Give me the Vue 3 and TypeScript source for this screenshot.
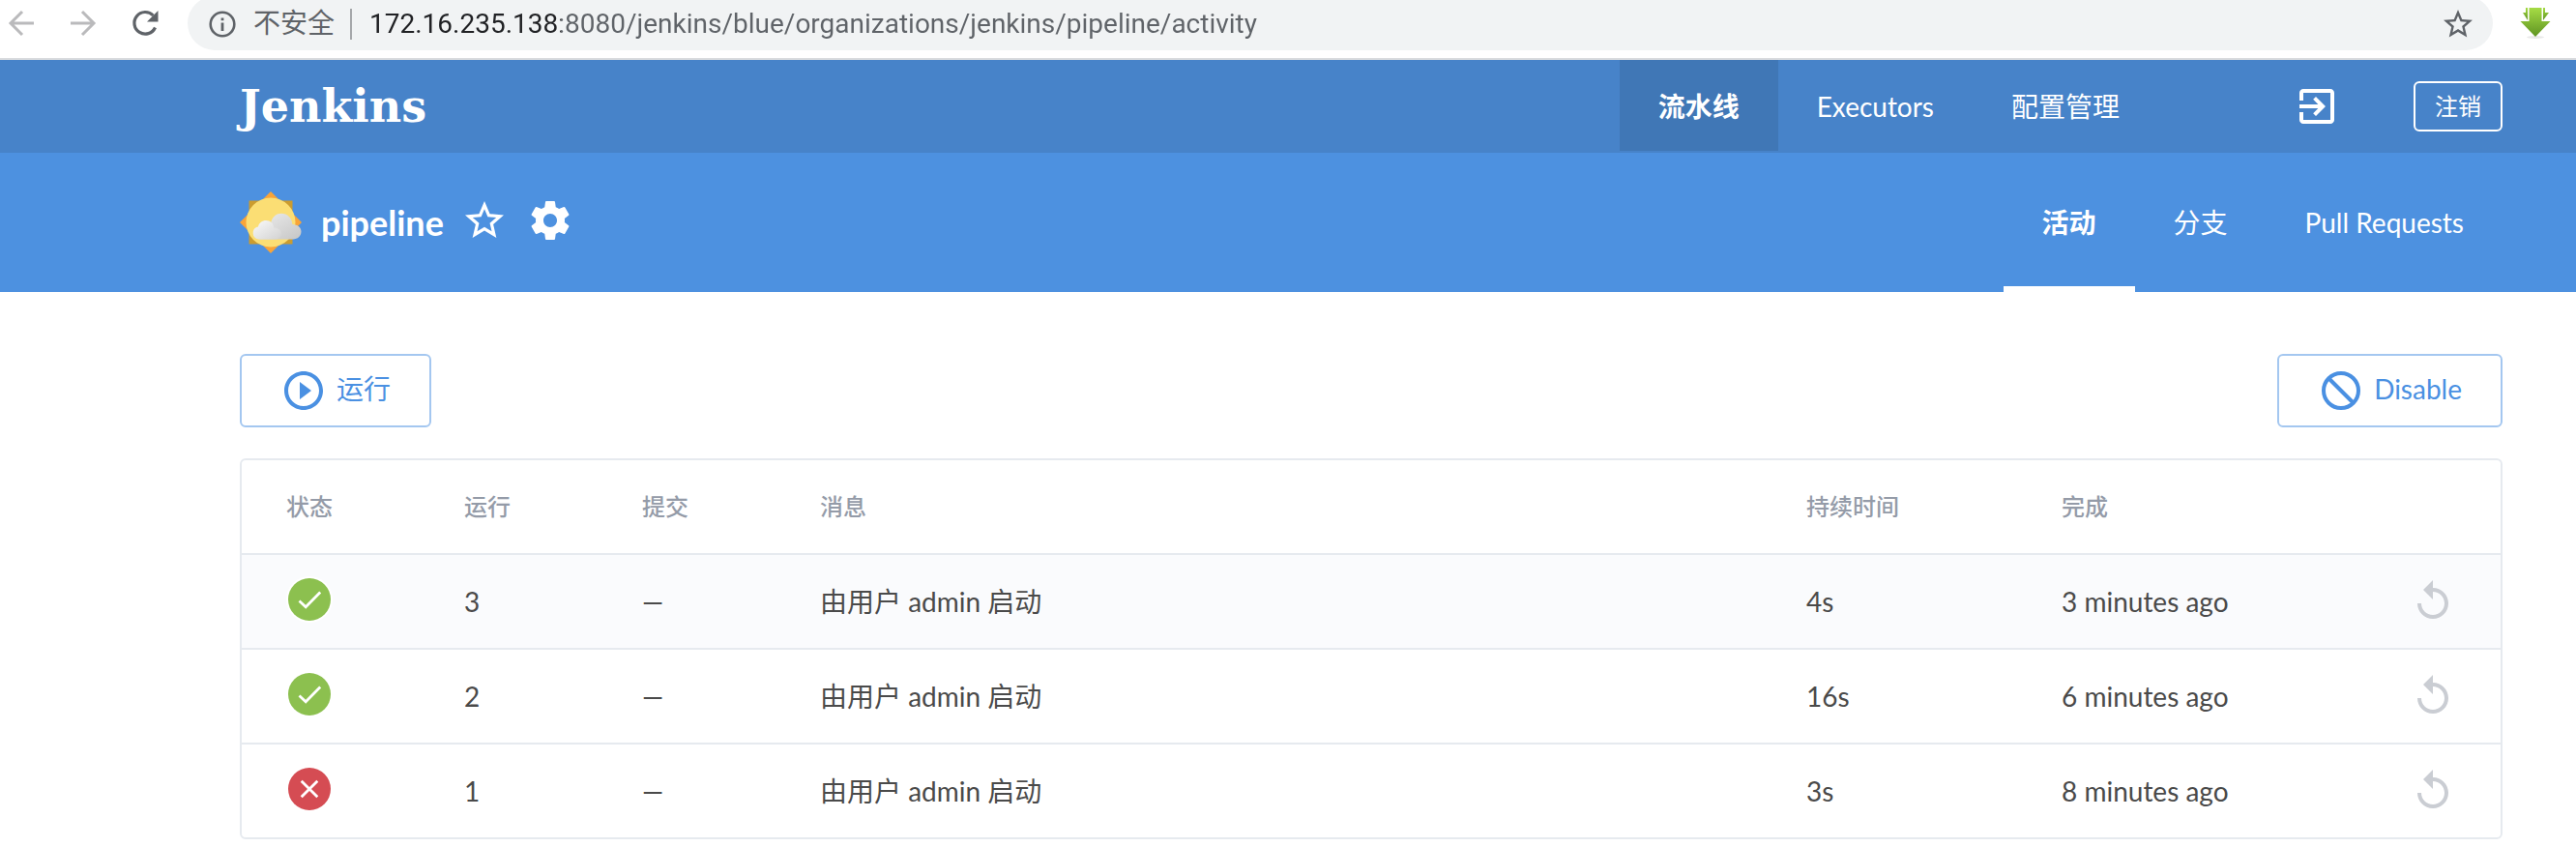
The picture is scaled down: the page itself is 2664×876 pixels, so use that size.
<script setup lang="ts">
import { ref } from 'vue'

interface Run {
  id: number
  ok: boolean
  commit: string
  message: string
  duration: string
  completed: string
}

const address = ref('172.16.235.138:8080/jenkins/blue/organizations/jenkins/pipeline/activity')

const runs: Run[] = [
  { id: 3, ok: true, commit: '—', message: '由用户 admin 启动', duration: '4s', completed: '3 minutes ago' },
  { id: 2, ok: true, commit: '—', message: '由用户 admin 启动', duration: '16s', completed: '6 minutes ago' },
  { id: 1, ok: false, commit: '—', message: '由用户 admin 启动', duration: '3s', completed: '8 minutes ago' },
]
const hovered = ref(3)
</script>

<template>
  <div class="page">
    <div class="chrome">
      <div class="chrome-nav">
        <button type="button" class="plain" aria-label="Back">
          <svg width="32" height="32" viewBox="0 0 32 32" fill="none" stroke="#bababc" stroke-width="3"><path d="M29 16H5M17 4L5 16l12 12" /></svg>
        </button>
        <button type="button" class="plain" aria-label="Forward">
          <svg width="32" height="32" viewBox="0 0 32 32" fill="none" stroke="#bababc" stroke-width="3"><path d="M3 16h24M15 4l12 12-12 12" /></svg>
        </button>
        <button type="button" class="plain" aria-label="Reload">
          <svg width="32" height="32" viewBox="0 0 32 32"><path d="M26.500 20.500A11.300 11.300 0 1 1 24.400 8" fill="none" stroke="#5f6368" stroke-width="3.200" /><path d="M29.500 3v11.500H18z" fill="#5f6368" /></svg>
        </button>
      </div>
      <div class="omnibox">
        <svg class="info" width="28" height="28" viewBox="0 0 28 28"><circle cx="14" cy="14" r="12.300" fill="none" stroke="#5f6368" stroke-width="2.600" /><path d="M12.600 12.500h2.800V21h-2.800zM12.600 7.500h2.800v2.800h-2.800z" fill="#5f6368" /></svg>
        <label class="insecure" for="address">不安全</label>
        <span class="divider"></span>
        <input id="address" v-model="address" class="address" type="text" spellcheck="false" />
        <button type="button" class="plain" aria-label="Bookmark">
          <svg width="36" height="36" viewBox="0 0 24 24" fill="#5f6368"><path d="M22 9.240l-7.190-.620L12 2 9.190 8.630 2 9.240l5.460 4.730L5.820 21 12 17.270 18.180 21l-1.630-7.030L22 9.240zM12 15.400l-3.760 2.270 1-4.280-3.320-2.880 4.380-.380L12 6.100l1.710 4.040 4.380.380-3.320 2.880 1 4.280L12 15.400z" /></svg>
        </button>
      </div>
      <button type="button" class="plain download" aria-label="Download">
        <svg width="32" height="34" viewBox="0 0 32 34">
          <defs><linearGradient id="leaf" x1="0" y1="0" x2="0" y2="1"><stop offset="0" stop-color="#a6dc45" /><stop offset="1" stop-color="#5f9422" /></linearGradient></defs>
          <ellipse cx="16" cy="31.500" rx="9" ry="1.500" fill="#e9e9e9" />
          <path d="M3 6h3V1h20v5h4l-6 8H8z" fill="url(#leaf)" />
          <path d="M8 1v13H1l15 17 15-17h-7V1z" fill="#fff" />
          <path d="M9.500 1v14H.500L16 31l15.500-16h-9V1z" fill="url(#leaf)" />
        </svg>
      </button>
    </div>

    <header class="topbar">
      <a href="#" class="logo">Jenkins</a>
      <nav class="tabs">
        <a href="#" class="tab current">流水线</a>
        <a href="#" class="tab">Executors</a>
        <a href="#" class="tab">配置管理</a>
      </nav>
      <a href="#" class="exit" aria-label="Exit">
        <svg width="48" height="48" viewBox="0 0 24 24" fill="#fff"><path d="M10.090 15.590L11.500 17l5-5-5-5-1.410 1.410L12.670 11H3v2h9.670l-2.580 2.590zM19 3H5c-1.110 0-2 .900-2 2v4h2V5h14v14H5v-4H3v4c0 1.100.890 2 2 2h14c1.100 0 2-.900 2-2V5c0-1.100-.900-2-2-2z" /></svg>
      </a>
      <button type="button" class="logout">注销</button>
    </header>

    <div class="subbar">
      <svg class="weather" width="64" height="64" viewBox="0 0 64 64">
        <defs>
          <linearGradient id="cloudBack" x1="0" y1="0" x2="1" y2="1"><stop offset="0" stop-color="#ececec" /><stop offset="1" stop-color="#c6c6c6" /></linearGradient>
          <linearGradient id="cloudFront" x1="0" y1="0" x2="1" y2="1"><stop offset="0" stop-color="#fafafa" /><stop offset="1" stop-color="#d2d2d2" /></linearGradient>
        </defs>
        <path d="M32 0l32 32-32 32L0 32z" fill="#f8a438" />
        <path d="M9.500 9.500h45v45h-45z" fill="#cb9c2f" />
        <circle cx="32" cy="32" r="25.500" fill="#fbde74" />
        <path d="M20 49.500V34h12c.5-6.500 5-11.300 11-11.300 6.200 0 11 4.800 11.300 11.200C59.700 34.200 63.500 37 63.500 41.600c0 4.700-3.800 7.900-8.500 7.900z" fill="url(#cloudBack)" />
        <path d="M20.500 49.500c-4 0-6.800-2.800-6.800-6.600 0-3.700 2.300-6 5.300-6.400.8-4 4.200-6.500 8.200-6.500 4.400 0 7.600 3 8.200 7.400 4.200 0 7.400 2.500 7.400 6 0 3.600-3 6.100-6.800 6.100z" fill="url(#cloudFront)" />
      </svg>
      <h1 class="title">pipeline</h1>
      <button type="button" class="plain star" aria-label="Favorite">
        <svg width="48" height="48" viewBox="0 0 24 24" fill="#fff"><path d="M22 9.240l-7.190-.620L12 2 9.190 8.630 2 9.240l5.460 4.730L5.820 21 12 17.270 18.180 21l-1.630-7.030L22 9.240zM12 15.400l-3.760 2.270 1-4.280-3.320-2.880 4.380-.380L12 6.100l1.710 4.040 4.380.380-3.320 2.880 1 4.280L12 15.400z" /></svg>
      </button>
      <a href="#" class="gear" aria-label="Settings">
        <svg width="48" height="48" viewBox="0 0 24 24" fill="#fff"><path d="M19.430 12.980c.04-.32.07-.64.07-.98s-.03-.66-.07-.98l2.110-1.650c.19-.15.24-.42.12-.64l-2-3.460c-.12-.22-.39-.3-.61-.22l-2.490 1c-.52-.4-1.080-.73-1.690-.98l-.38-2.650C14.460 2.180 14.250 2 14 2h-4c-.25 0-.46.18-.49.42l-.38 2.650c-.61.25-1.170.59-1.690.98l-2.490-1c-.23-.09-.49 0-.61.22l-2 3.460c-.13.22-.07.49.12.64l2.110 1.650c-.04.32-.07.65-.07.98s.03.66.07.98l-2.110 1.650c-.19.15-.24.42-.12.64l2 3.460c.12.22.39.3.61.22l2.490-1c.52.4 1.080.73 1.690.98l.38 2.650c.03.24.24.42.49.42h4c.25 0 .46-.18.49-.42l.38-2.650c.61-.25 1.170-.59 1.690-.98l2.490 1c.23.09.49 0 .61-.22l2-3.460c.12-.22.07-.49-.12-.64l-2.110-1.650zM12 15.500c-1.930 0-3.500-1.570-3.500-3.500s1.570-3.500 3.500-3.500 3.500 1.570 3.500 3.500-1.570 3.500-3.500 3.500z" /></svg>
      </a>
      <nav class="tabs subtabs">
        <a href="#" class="tab current">活动</a>
        <a href="#" class="tab">分支</a>
        <a href="#" class="tab">Pull Requests</a>
      </nav>
    </div>

    <main class="content">
      <div class="actions">
        <button type="button" class="action">
          <svg width="48" height="48" viewBox="0 0 24 24" fill="#4a90e2"><path d="M10 16.500l6-4.500-6-4.500v9zM12 2C6.480 2 2 6.480 2 12s4.480 10 10 10 10-4.480 10-10S17.520 2 12 2zm0 18c-4.410 0-8-3.590-8-8s3.590-8 8-8 8 3.590 8 8-3.590 8-8 8z" /></svg>
          <span>运行</span>
        </button>
        <button type="button" class="action">
          <svg width="48" height="48" viewBox="0 0 24 24" fill="none" stroke="#4a90e2" stroke-width="2"><circle cx="12" cy="12" r="9" /><path d="M6 6l12 12" /></svg>
          <span>Disable</span>
        </button>
      </div>

      <div class="card">
        <table class="runs">
          <colgroup>
            <col class="c-status" /><col class="c-small" /><col class="c-small" /><col /><col class="c-duration" /><col class="c-done" /><col class="c-replay" />
          </colgroup>
          <thead>
            <tr><th>状态</th><th>运行</th><th>提交</th><th>消息</th><th>持续时间</th><th>完成</th><th></th></tr>
          </thead>
          <tbody>
            <tr v-for="run in runs" :key="run.id" :class="{ hovered: run.id === hovered }" @mouseenter="hovered = run.id">
              <td class="status">
                <svg width="48" height="48" viewBox="0 0 48 48" fill="none">
                  <circle cx="24" cy="24" r="24" fill="#fff" />
                  <circle cx="24" cy="24" r="22" :fill="run.ok ? '#8cc04f' : '#d54c53'" />
                  <path v-if="run.ok" d="M13.500 25.500l6.700 6.200L35.200 16.600" stroke="#fff" stroke-width="2.800" />
                  <path v-else d="M15.700 15.700l16.600 16.600M32.300 15.700L15.700 32.300" stroke="#fff" stroke-width="2.800" />
                </svg>
              </td>
              <td>{{ run.id }}</td>
              <td>{{ run.commit }}</td>
              <td>{{ run.message }}</td>
              <td>{{ run.duration }}</td>
              <td>{{ run.completed }}</td>
              <td>
                <button type="button" class="plain" aria-label="Replay">
                  <svg width="48" height="48" viewBox="0 0 24 24" fill="#cacdd3"><path d="M12 5V1L7 6l5 5V7c3.310 0 6 2.690 6 6s-2.690 6-6 6-6-2.690-6-6H4c0 4.420 3.580 8 8 8s8-3.580 8-8-3.580-8-8-8z" /></svg>
                </button>
              </td>
            </tr>
          </tbody>
        </table>
      </div>
    </main>
  </div>
</template>

<style>
body {
  margin: 0;
  background: #fff;
}
</style>

<style scoped>
.page {
  font-family: Lato, "Noto Sans CJK SC", sans-serif;
  font-size: 28px;
  line-height: 40px;
  color: #4a4a4a;
}
svg {
  display: block;
  flex: none;
}
a {
  color: inherit;
  text-decoration: none;
}
button {
  font: inherit;
  cursor: pointer;
  background: none;
}
.plain {
  display: block;
  border: 0;
  padding: 0;
}
.chrome {
  display: flex;
  align-items: flex-start;
  height: 60px;
  border-bottom: 2px solid #d9dbde;
  overflow: hidden;
  font-family: Roboto, "Noto Sans CJK SC", sans-serif;
}
.chrome-nav {
  display: flex;
  gap: 32px;
  padding: 8px 28px 0 6px;
}
.omnibox {
  flex: 1;
  display: flex;
  align-items: center;
  box-sizing: border-box;
  height: 56px;
  margin-top: -4px;
  padding: 2px 18px 0 22px;
  border-radius: 28px;
  background: #f1f3f4;
}
.info {
  margin-right: 18px;
}
.insecure {
  color: #5f6368;
}
.divider {
  width: 2px;
  height: 32px;
  margin: 0 18px 0 16px;
  background: #a5a7aa;
}
.address {
  flex: 1;
  min-width: 0;
  border: 0;
  outline: 0;
  padding: 0;
  font: inherit;
  color: transparent;
  background: linear-gradient(90deg, #202124 198px, #5f6368 198px) text;
}
.download {
  padding: 7px 26px 0 28px;
}
.topbar,
.subbar {
  display: flex;
  align-items: center;
  padding: 0 76px 0 248px;
  color: #fff;
}
.topbar {
  height: 96px;
  background: #4783c9;
}
.logo {
  font-family: "DejaVu Serif", serif;
  font-size: 46px;
  font-weight: 700;
}
.tabs {
  display: flex;
  align-self: stretch;
  margin-left: auto;
}
.tab {
  display: flex;
  align-items: center;
  padding: 0 40px;
}
.tab.current {
  font-weight: 700;
}
.topbar .current {
  background: #4077b6;
  box-shadow: inset 0 -2px #4783c9;
}
.exit {
  margin: 0 76px 0 140px;
}
.logout {
  height: 52px;
  padding: 0 20px;
  border: 2px solid #fff;
  border-radius: 6px;
  color: #fff;
  font-size: 24px;
  line-height: 40px;
}
.subbar {
  height: 144px;
  background: #4d91e0;
}
.title {
  margin: 0 18px 0 20px;
  font-size: 36px;
  line-height: 48px;
  font-weight: 700;
}
.star,
.gear {
  margin-bottom: 4px;
}
.gear {
  margin-left: 20px;
}
.subtabs .current {
  box-shadow: inset 0 -6px #fff;
}
.content {
  padding: 64px 76px 8px 248px;
}
.actions {
  display: flex;
  justify-content: space-between;
  margin-bottom: 32px;
}
.action {
  display: flex;
  align-items: center;
  gap: 10px;
  height: 76px;
  padding: 0 40px;
  border: 2px solid #a4c7f0;
  border-radius: 6px;
  color: #4a90e2;
}
.action span {
  padding-bottom: 4px;
}
.card {
  border: 2px solid #e6eaef;
  border-radius: 6px;
  overflow: hidden;
}
.runs {
  width: 100%;
  table-layout: fixed;
  border-collapse: separate;
  border-spacing: 0;
}
.c-status {
  width: 230px;
}
.c-small {
  width: 184px;
}
.c-duration {
  width: 264px;
}
.c-done {
  width: 360px;
}
.c-replay {
  width: 94px;
}
th,
td {
  height: 96px;
  padding: 0;
  text-align: left;
  vertical-align: middle;
}
th:first-child {
  padding-left: 46px;
}
td.status {
  height: 92px;
  padding: 0 0 4px 46px;
}
td {
  border-top: 2px solid #e6eaef;
}
th {
  font-size: 24px;
  font-weight: 500;
  color: #949ba8;
}
.hovered td {
  background: #fafbfd;
}
</style>
